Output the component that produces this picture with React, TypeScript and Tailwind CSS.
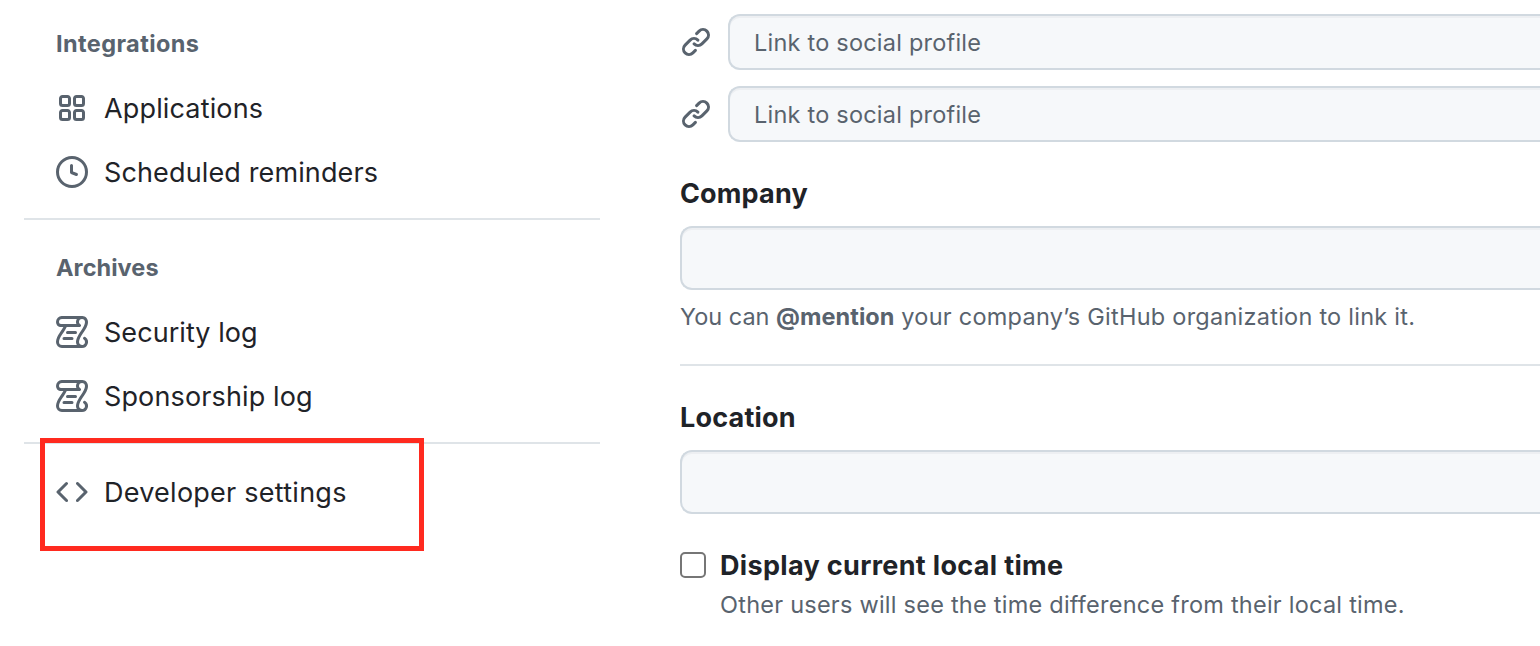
import React from "react";

const PATHS = {
  apps: "M1.5 3.25c0-.966.784-1.75 1.75-1.75h2.5c.966 0 1.75.784 1.75 1.75v2.5A1.75 1.75 0 0 1 5.75 7.5h-2.5A1.75 1.75 0 0 1 1.5 5.75Zm7 0c0-.966.784-1.75 1.75-1.75h2.5c.966 0 1.75.784 1.75 1.75v2.5a1.75 1.75 0 0 1-1.75 1.75h-2.5A1.75 1.75 0 0 1 8.5 5.75Zm-7 7c0-.966.784-1.75 1.75-1.75h2.5c.966 0 1.75.784 1.75 1.75v2.5a1.75 1.75 0 0 1-1.75 1.75h-2.5a1.75 1.75 0 0 1-1.75-1.75Zm7 0c0-.966.784-1.75 1.75-1.75h2.5c.966 0 1.75.784 1.75 1.75v2.5a1.75 1.75 0 0 1-1.75 1.75h-2.5a1.75 1.75 0 0 1-1.75-1.75ZM3.25 3a.25.25 0 0 0-.25.25v2.5c0 .138.112.25.25.25h2.5A.25.25 0 0 0 6 5.75v-2.5A.25.25 0 0 0 5.75 3Zm7 0a.25.25 0 0 0-.25.25v2.5c0 .138.112.25.25.25h2.5a.25.25 0 0 0 .25-.25v-2.5a.25.25 0 0 0-.25-.25Zm-7 7a.25.25 0 0 0-.25.25v2.5c0 .138.112.25.25.25h2.5a.25.25 0 0 0 .25-.25v-2.5a.25.25 0 0 0-.25-.25Zm7 0a.25.25 0 0 0-.25.25v2.5c0 .138.112.25.25.25h2.5a.25.25 0 0 0 .25-.25v-2.5a.25.25 0 0 0-.25-.25Z",
  clock: "M8 0a8 8 0 1 1 0 16A8 8 0 0 1 8 0ZM1.5 8a6.5 6.5 0 1 0 13 0 6.5 6.5 0 0 0-13 0Zm7-3.25v2.992l2.028.812a.75.75 0 0 1-.557 1.392l-2.5-1A.751.751 0 0 1 7 8.25v-3.5a.75.75 0 0 1 1.5 0Z",
  log: "M5 8.25a.75.75 0 0 1 .75-.75h4a.75.75 0 0 1 0 1.5h-4A.75.75 0 0 1 5 8.25ZM4 10.5A.75.75 0 0 0 4 12h4a.75.75 0 0 0 0-1.5H4ZM13-.005c1.654 0 3 1.328 3 3 0 .982-.338 1.933-.783 2.818-.443.879-1.028 1.758-1.582 2.588l-.011.017c-.568.853-1.104 1.659-1.501 2.446-.398.789-.623 1.494-.623 2.136a1.5 1.5 0 1 0 2.333-1.248.75.75 0 0 1 .834-1.246A3 3 0 0 1 13 16H3a3 3 0 0 1-3-3c0-1.582.891-3.135 1.777-4.506.209-.322.418-.637.623-.946.473-.709.923-1.386 1.287-2.048H2.51c-.576 0-1.381-.133-1.907-.783A2.68 2.68 0 0 1 0 2.995a3 3 0 0 1 3-3Zm0 1.5a1.5 1.5 0 0 0-1.5 1.5c0 .476.223.834.667 1.132A.75.75 0 0 1 11.75 5.5H5.368c-.467 1.003-1.141 2.015-1.773 2.963-.192.289-.381.571-.558.845C2.13 10.711 1.5 11.916 1.5 13A1.5 1.5 0 0 0 3 14.5h7.401A2.989 2.989 0 0 1 10 13c0-.979.338-1.928.784-2.812.441-.874 1.023-1.748 1.575-2.576l.017-.026c.568-.853 1.103-1.658 1.501-2.448.398-.79.623-1.497.623-2.143 0-.838-.669-1.5-1.5-1.5Zm-10 0a1.5 1.5 0 0 0-1.5 1.5c0 .321.1.569.27.778.097.12.325.227.74.227h7.674A2.737 2.737 0 0 1 10 2.995c0-.546.146-1.059.401-1.5Z",
  code: "m11.28 3.22 4.25 4.25a.75.75 0 0 1 0 1.06l-4.25 4.25a.749.749 0 0 1-1.275-.326.749.749 0 0 1 .215-.734L13.94 8l-3.72-3.72a.749.749 0 0 1 .326-1.275.749.749 0 0 1 .734.215Zm-6.56 0a.751.751 0 0 1 1.042.018.751.751 0 0 1 .018 1.042L2.06 8l3.72 3.72a.749.749 0 0 1-.326 1.275.749.749 0 0 1-.734-.215L.47 8.53a.75.75 0 0 1 0-1.06Z",
  link: "m7.775 3.275 1.25-1.25a3.5 3.5 0 1 1 4.95 4.95l-2.5 2.5a3.5 3.5 0 0 1-4.95 0 .751.751 0 0 1 .018-1.042.751.751 0 0 1 1.042-.018 1.998 1.998 0 0 0 2.83 0l2.5-2.5a2.002 2.002 0 0 0-2.83-2.83l-1.25 1.25a.751.751 0 0 1-1.042-.018.751.751 0 0 1-.018-1.042Zm-4.69 9.64a1.998 1.998 0 0 0 2.83 0l1.25-1.25a.751.751 0 0 1 1.042.018.751.751 0 0 1 .018 1.042l-1.25 1.25a3.5 3.5 0 1 1-4.95-4.95l2.5-2.5a3.5 3.5 0 0 1 4.95 0 .751.751 0 0 1-.018 1.042.751.751 0 0 1-1.042.018 1.998 1.998 0 0 0-2.83 0l-2.5 2.5a1.998 1.998 0 0 0 0 2.83Z",
};

function Icon({ name }: { name: keyof typeof PATHS }) {
  return (
    <svg viewBox="0 0 16 16" className="size-8 shrink-0 fill-[#59636e]" aria-hidden="true">
      <path d={PATHS[name]} />
    </svg>
  );
}

function NavItem({ icon, label, tracking }: { icon: keyof typeof PATHS; label: string; tracking: string }) {
  return (
    <a className={`flex h-16 items-center gap-4 pl-8 text-[27px] leading-10 ${tracking}`}>
      <Icon name={icon} />
      <span className="pt-0.5">{label}</span>
    </a>
  );
}

function NavHeading({ children, tracking }: { children: React.ReactNode; tracking: string }) {
  return (
    <h3 className={`flex h-16 items-center pl-8 text-[23.5px] font-bold text-[#59636e] ${tracking}`}>{children}</h3>
  );
}

const FIELD =
  "block min-w-0 flex-1 rounded-l-xl border-2 border-r-0 border-[#d1d9e0] bg-[#f6f8fa] shadow-[inset_0_2px_0_rgba(31,35,40,0.04)] outline-none placeholder:text-[#59636e] placeholder:opacity-100";

function SocialLink() {
  return (
    <div className="flex h-14 items-center gap-4">
      <Icon name="link" />
      <input className={`${FIELD} h-14 pl-6 text-[23.5px] tracking-[0.22px]`} placeholder="Link to social profile" />
    </div>
  );
}

export default function App() {
  return (
    <div className="flex h-[646px] w-full overflow-hidden bg-white font-['Inter',sans-serif] text-[#1f2328]">
      <aside className="ml-6 w-[576px] shrink-0 pt-3">
        <NavHeading tracking="tracking-[0.4px]">Integrations</NavHeading>
        <NavItem icon="apps" label="Applications" tracking="tracking-[0.15px]" />
        <NavItem icon="clock" label="Scheduled reminders" tracking="tracking-[0.13px]" />
        <hr className="mt-3.5 mb-4 border-t-2 border-[#dfe4e8]" />
        <NavHeading tracking="tracking-[0.05px]">Archives</NavHeading>
        <NavItem icon="log" label="Security log" tracking="tracking-[0.05px]" />
        <NavItem icon="log" label="Sponsorship log" tracking="tracking-[0.13px]" />
        <hr className="mt-3.5 mb-4 border-t-2 border-[#dfe4e8]" />
        <div className="relative">
          <NavItem icon="code" label="Developer settings" tracking="tracking-[0.25px]" />
          <div className="pointer-events-none absolute -top-[22px] left-4 h-[113px] w-96 border-5 border-[#ff2a1f]" />
        </div>
      </aside>

      <main className="ml-20 min-w-0 flex-1 pt-3.5">
        <div className="flex flex-col gap-4">
          <SocialLink />
          <SocialLink />
        </div>

        <label className="mt-[31px] block text-[27px] leading-[42px] font-bold tracking-[0.15px]">Company</label>
        <div className="mt-[11px] flex">
          <input aria-label="Company" className={`${FIELD} h-16`} />
        </div>
        <p className="mt-[9px] text-[23.5px] leading-9 tracking-[0.25px] whitespace-nowrap text-[#59636e]">
          <span className="tracking-normal">You can </span>
          <strong className="font-bold tracking-[0.05px]">@mention</strong> your company’s GitHub organization to link it.
        </p>
        <hr className="mt-[29px] border-t-2 border-[#dfe4e8]" />

        <label className="mt-[31px] block text-[27px] leading-[42px] font-bold tracking-[0.2px]">Location</label>
        <div className="mt-[11px] flex">
          <input aria-label="Location" className={`${FIELD} h-16`} />
        </div>

        <div className="mt-[31px] flex">
          <input
            type="checkbox"
            aria-label="Display current local time"
            className="mt-[7px] size-[26px] shrink-0 appearance-none rounded-[5px] border-2 border-[#767676] bg-white"
          />
          <div className="ml-3.5 whitespace-nowrap">
            <div className="text-[27px] leading-[42px] font-bold tracking-[0.33px]">Display current local time</div>
            <p className="text-[23.5px] leading-9 tracking-[0.24px] text-[#59636e]">
              Other users will see the time difference from their local time.
            </p>
          </div>
        </div>
      </main>
    </div>
  );
}
